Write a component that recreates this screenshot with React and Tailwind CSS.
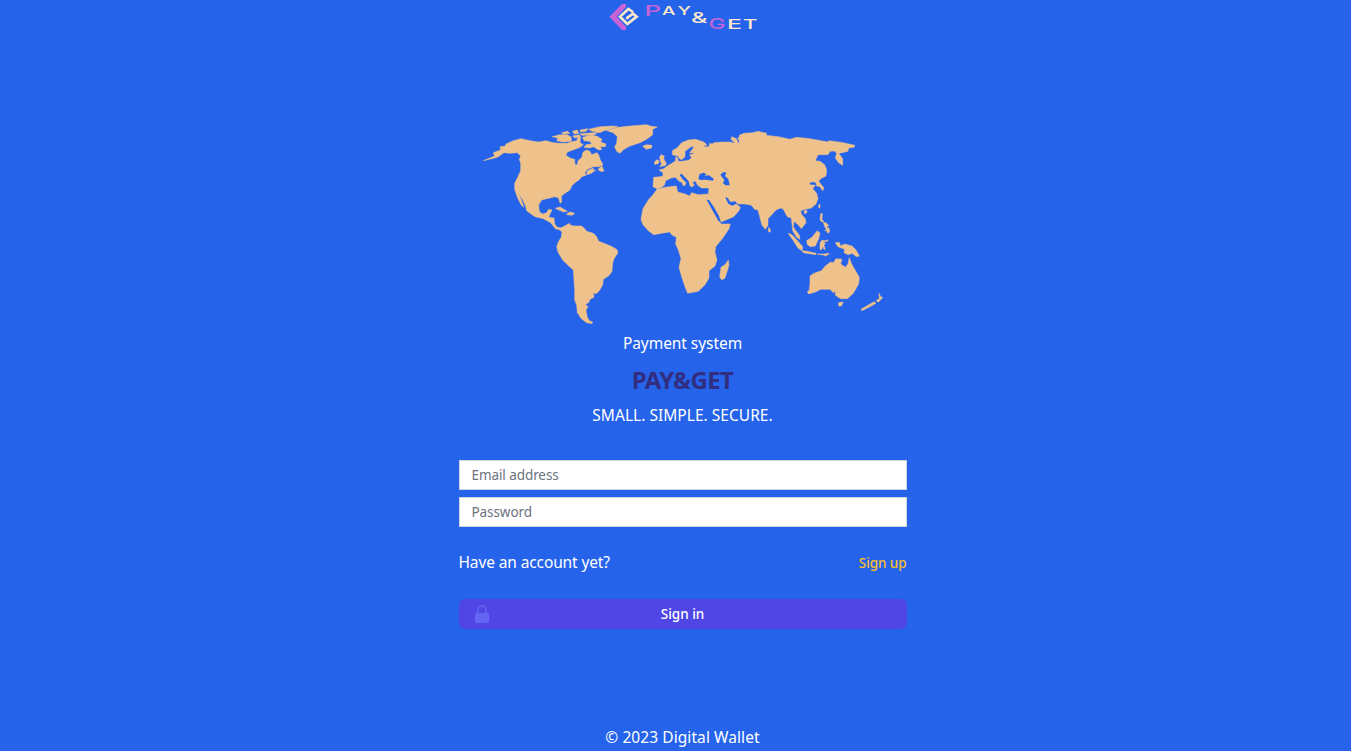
const NORTH_AMERICA = [
  '10,122 44,108 40,98 62,90 60,80 76,78 78,72 100,62 122,56 150,62 175,66 198,62 220,68 240,70 262,70 272,66 290,62 294,52 302,50 300,68 310,74 300,82 285,88 262,96 258,106 270,114 284,118 285,134 292,134 294,122 306,112 308,98 318,90 330,94 335,104 350,98 356,104 360,118 369,134 358,140 340,140 322,148 315,158 318,166 305,170 297,180 285,188 275,198 270,210 255,220 244,228 245,246 240,250 236,234 225,230 200,236 185,240 176,255 178,275 188,282 200,278 206,268 216,270 210,282 206,292 222,294 224,312 232,322 246,324 250,328 240,330 226,326 212,308 190,296 165,290 150,280 140,272 136,256 126,236 116,220 122,235 132,262 124,256 112,232 104,208 104,190 114,170 122,152 122,130 118,118 122,108 112,98 90,100 72,98 52,112',
  '216,50 240,44 262,44 274,52 274,64 250,66 230,62 234,54',
  '245,38 262,34 270,40 250,42',
  '278,34 292,30 296,40 282,42',
  '300,30 324,26 318,34 302,36',
  '278,48 298,44 300,50 284,54',
  '300,41 330,39 352,38 340,46 305,46',
  '326,28 360,20 400,18 414,20 395,26 372,32 360,38 336,34',
  '308,52 330,46 350,48 366,58 362,66 378,72 376,80 360,80 366,88 356,90 340,80 328,84 312,82 318,74 335,72 330,64 312,62',
  '322,152 340,144 340,152 348,150 334,160 320,164',
  '354,148 366,138 372,154 360,154',
  '226,265 240,261 262,274 250,276 232,268',
  '262,280 270,276 284,280 276,286 260,284',
];
const GREENLAND = [
  '170,32 205,22 240,18 290,14 304,19 322,21 308,28 308,44 290,58 270,68 240,78 222,88 210,100 200,94 194,80 200,70 202,50 190,38',
  '278,78 290,74 306,76 304,84 288,88',
];
const SOUTH_AMERICA = [
  '60,88 66,82 74,78 88,70 92,76 105,78 125,78 134,86 140,94 160,100 170,110 176,124 192,130 212,138 230,148 234,158 222,176 218,190 216,214 208,226 190,238 188,255 178,272 168,282 160,278 162,292 150,298 146,308 136,312 144,320 138,330 140,342 142,352 148,362 158,366 156,371 140,368 124,356 112,338 110,316 104,300 104,270 100,210 84,196 68,180 54,156 50,140 56,124 64,112 66,98',
];
const WEST_EURASIA = [
  '56,172 76,170 84,168 84,158 72,150 86,146 100,136 114,128 122,122 122,110 128,114 130,124 140,124 160,121 170,114 164,104 182,100 164,98 172,88 178,80 168,80 150,94 150,110 140,119 134,116 128,108 112,104 112,92 126,84 140,68 160,60 182,58 206,66 216,74 202,80 222,80 224,70 232,72 236,68 262,66 284,66 300,70 288,58 290,50 304,56 312,72 314,62 308,54 330,46 362,38 362,268 350,256 330,252 310,252 300,244 292,248 284,246 274,232 271,234 280,250 290,256 304,252 316,262 312,272 296,290 258,306 250,290 234,264 222,242 214,240 220,224 222,204 200,204 188,196 182,184 172,186 178,196 170,201 164,196 160,184 150,174 140,162 134,165 142,178 154,188 148,198 142,194 142,188 130,182 122,172 108,174 92,182 88,196 76,204 66,206 54,200',
  '78,104 88,108 86,116 94,130 92,136 74,140 80,132 76,124 74,112',
  '58,126 66,119 72,122 71,130 60,134',
];
const AFRICA = [
  '66,28 90,22 124,18 128,36 150,42 164,48 170,38 190,44 220,42 216,60 234,92 252,118 258,132 286,132 282,146 262,176 242,200 240,216 246,240 240,258 222,272 222,294 210,314 190,334 158,340 150,320 140,290 132,262 138,236 130,210 122,192 124,172 110,164 104,156 90,158 56,164 40,152 24,134 18,118 24,86 40,60 54,44',
  '280,240 282,256 270,294 260,300 254,290 258,262 270,254',
];
const EAST_ASIA = [
  '-2,46 12,40 40,38 54,34 80,40 78,46 115,50 150,58 170,52 210,56 264,66 266,62 290,65 310,68 344,76 342,82 326,84 324,94 306,98 296,100 308,116 308,136 296,128 286,114 290,100 284,93 270,94 264,104 234,104 226,122 240,124 254,134 260,150 258,168 242,176 236,184 244,194 252,204 248,212 240,200 230,198 228,188 220,185 208,188 210,194 226,196 218,206 230,220 234,236 228,252 214,264 196,268 182,272 184,282 196,296 198,308 184,326 176,316 162,304 160,320 166,330 178,345 180,358 170,352 158,332 154,294 142,290 130,268 122,264 108,270 84,296 84,316 76,328 66,316 54,270 44,268 32,252 -2,249',
  '192,273 200,270 201,278 194,281',
  '236,256 240,252 240,263 237,264',
];
const OCEANIA = [
  '56,112 62,120 60,127 55,124',
  '114,130 126,134 144,154 158,170 156,182 144,174 130,152',
  '156,182 172,184 198,190 198,194 160,188',
  '202,192 222,192 236,190 238,192 226,198 220,195',
  '170,152 186,142 202,122 210,130 206,146 196,168 182,170 172,164',
  '210,158 216,151 228,152 234,149 234,153 218,157 226,160 222,166 226,178 222,178 218,168 215,179 210,178',
  '212,72 217,70 216,90 222,94 218,97 210,90',
  '220,98 228,98 236,106 232,109 230,118 225,112',
  '224,122 236,112 239,126 234,130 230,122',
  '256,158 268,157 272,168 284,162 306,168 318,180 328,198 320,200 306,190 294,194 282,188 284,178 264,170',
  '180,258 192,250 214,242 226,228 242,216 250,218 258,206 276,208 272,222 286,232 294,222 298,203 304,220 314,238 328,262 326,282 310,310 292,326 272,326 256,316 256,304 250,308 240,298 212,298 196,306 176,312 172,306 178,300 180,280',
  '266,338 280,336 274,348 266,348',
  '387,310 392,320 398,322 386,336 378,332 388,326',
  '372,335 378,340 364,348 336,362 333,358',
];
const INLAND_SEAS = [
  '190,176 194,162 206,158 214,162 208,167 222,166 236,176 234,182 212,179 196,180',
  '256,164 266,156 274,158 270,168 280,178 284,196 272,196 264,190 268,180',
  '215,239 222,240 237,262 252,288 258,308 250,302 234,274',
  '271,231 279,235 286,246 300,244 303,251 292,257 280,251',
  '134,165 140,161 161,184 163,198 156,196 152,184',
];

function Land({ x, y, shapes }) {
  return (
    <g transform={`translate(${x} ${y}) scale(0.33333)`}>
      {shapes.map((points) => (
        <polygon key={points} points={points} />
      ))}
    </g>
  );
}

function WorldMap() {
  return (
    <svg viewBox="483 124 400 200" className="block h-[200px] w-[400px]" aria-hidden="true">
      <g fill="#f0c28b" stroke="#f0c28b" strokeWidth="1.5" strokeLinejoin="round">
        <Land x={480} y={120} shapes={NORTH_AMERICA} />
        <Land x={550} y={120} shapes={GREENLAND} />
        <Land x={540} y={200} shapes={SOUTH_AMERICA} />
        <Land x={635} y={120} shapes={WEST_EURASIA} />
        <Land x={635} y={180} shapes={AFRICA} />
        <Land x={740} y={120} shapes={EAST_ASIA} />
        <Land x={750} y={190} shapes={OCEANIA} />
      </g>
      <g fill="#2563eb">
        <Land x={635} y={120} shapes={INLAND_SEAS} />
      </g>
    </svg>
  );
}

const LOGO_LETTERS = [
  { ch: 'P', x: 44.5, y: 16.2, w: 16.5, size: 15, pink: true },
  { ch: 'A', x: 62, y: 15.2, w: 13.5, size: 12 },
  { ch: 'Y', x: 77.5, y: 15.2, w: 13.5, size: 12 },
  { ch: '&', x: 91, y: 22.8, w: 16.5, size: 15 },
  { ch: 'G', x: 108.5, y: 28.8, w: 17, size: 15, pink: true },
  { ch: 'E', x: 127, y: 28.8, w: 15, size: 12.5 },
  { ch: 'T', x: 143, y: 28.8, w: 14.5, size: 12.5 },
];

function Logo() {
  return (
    <svg viewBox="0 0 166 34" className="block h-[34px] w-[166px]" role="img">
      <g transform="scale(0.33333)">
        <path d="M28 50 66 12H78V21L50 50 78 80V90H66Z" fill="#c763d6" />
        <path
          d="M99 36 85 27 60 50 82 72 110 50 99 41 82 53V58"
          fill="none"
          stroke="#fde8cc"
          strokeWidth="8"
        />
      </g>
      {LOGO_LETTERS.map(({ ch, x, y, w, size, pink }) => (
        <text
          key={ch}
          x={x}
          y={y}
          textLength={w}
          lengthAdjust="spacingAndGlyphs"
          fontFamily="Inter, sans-serif"
          fontWeight="500"
          fontSize={size}
          fill={pink ? '#c763d6' : '#fde8cc'}
        >
          {ch}
        </text>
      ))}
    </svg>
  );
}

function LockIcon() {
  return (
    <svg viewBox="0 0 14 18" className="h-[18px] w-3.5 fill-[#6366f1]" aria-hidden="true">
      <path d="M7 0a4.7 4.7 0 0 0-4.7 4.7V8H2a2 2 0 0 0-2 2v6a2 2 0 0 0 2 2h10a2 2 0 0 0 2-2v-6a2 2 0 0 0-2-2h-.3V4.700A4.700 4.700 0 0 0 7 0Zm3.100 8H3.900V4.700a3.100 3.100 0 0 1 6.200 0Z" />
    </svg>
  );
}

const inputClass =
  "block h-[30px] w-full border border-[#d1d5db] bg-white px-3 font-['Noto_Sans',sans-serif] text-[13.5px] tracking-[-0.08px] text-[#111827] placeholder:text-[#6b7280] focus:outline-none";

export default function App() {
  return (
    <div className="flex h-[751px] flex-col items-center overflow-hidden bg-[#2563eb] pl-[14px] font-['Noto_Sans',sans-serif] text-[15.5px] leading-6 text-white">
      <header>
        <Logo />
      </header>
      <main className="mt-[90px] flex w-[448px] flex-col items-center">
        <WorldMap />
        <p className="mt-[7px] tracking-[-0.06px]">Payment system</p>
        <h1 className="mt-[9px] text-2xl leading-8 font-bold tracking-[-0.6px] text-[#312e81]">PAY&amp;GET</h1>
        <p className="mt-[7px] tracking-[0.03px]">SMALL. SIMPLE. SECURE.</p>
        <form className="mt-[33px] w-full" onSubmit={(e) => e.preventDefault()}>
          <div className="flex flex-col gap-[7px]">
            <input type="email" placeholder="Email address" className={inputClass} />
            <input type="password" placeholder="Password" className={inputClass} />
          </div>
          <div className="mt-[23px] flex items-start justify-between">
            <span className="tracking-[-0.12px]">Have an account yet?</span>
            <a href="#" className="pt-px text-[13.5px] font-medium tracking-[-0.08px] text-[#fbbf24]">Sign up</a>
          </div>
          <button
            type="submit"
            className="mt-6 grid h-[30px] w-full grid-cols-[1fr_auto_1fr] items-center rounded-md bg-[#4f46e5] px-4 text-[13.5px] font-medium"
          >
            <LockIcon />
            <span>Sign in</span>
          </button>
        </form>
      </main>
      <footer className="mt-auto pb-0.5 tracking-[0.08px]">© 2023 Digital Wallet</footer>
    </div>
  );
}
